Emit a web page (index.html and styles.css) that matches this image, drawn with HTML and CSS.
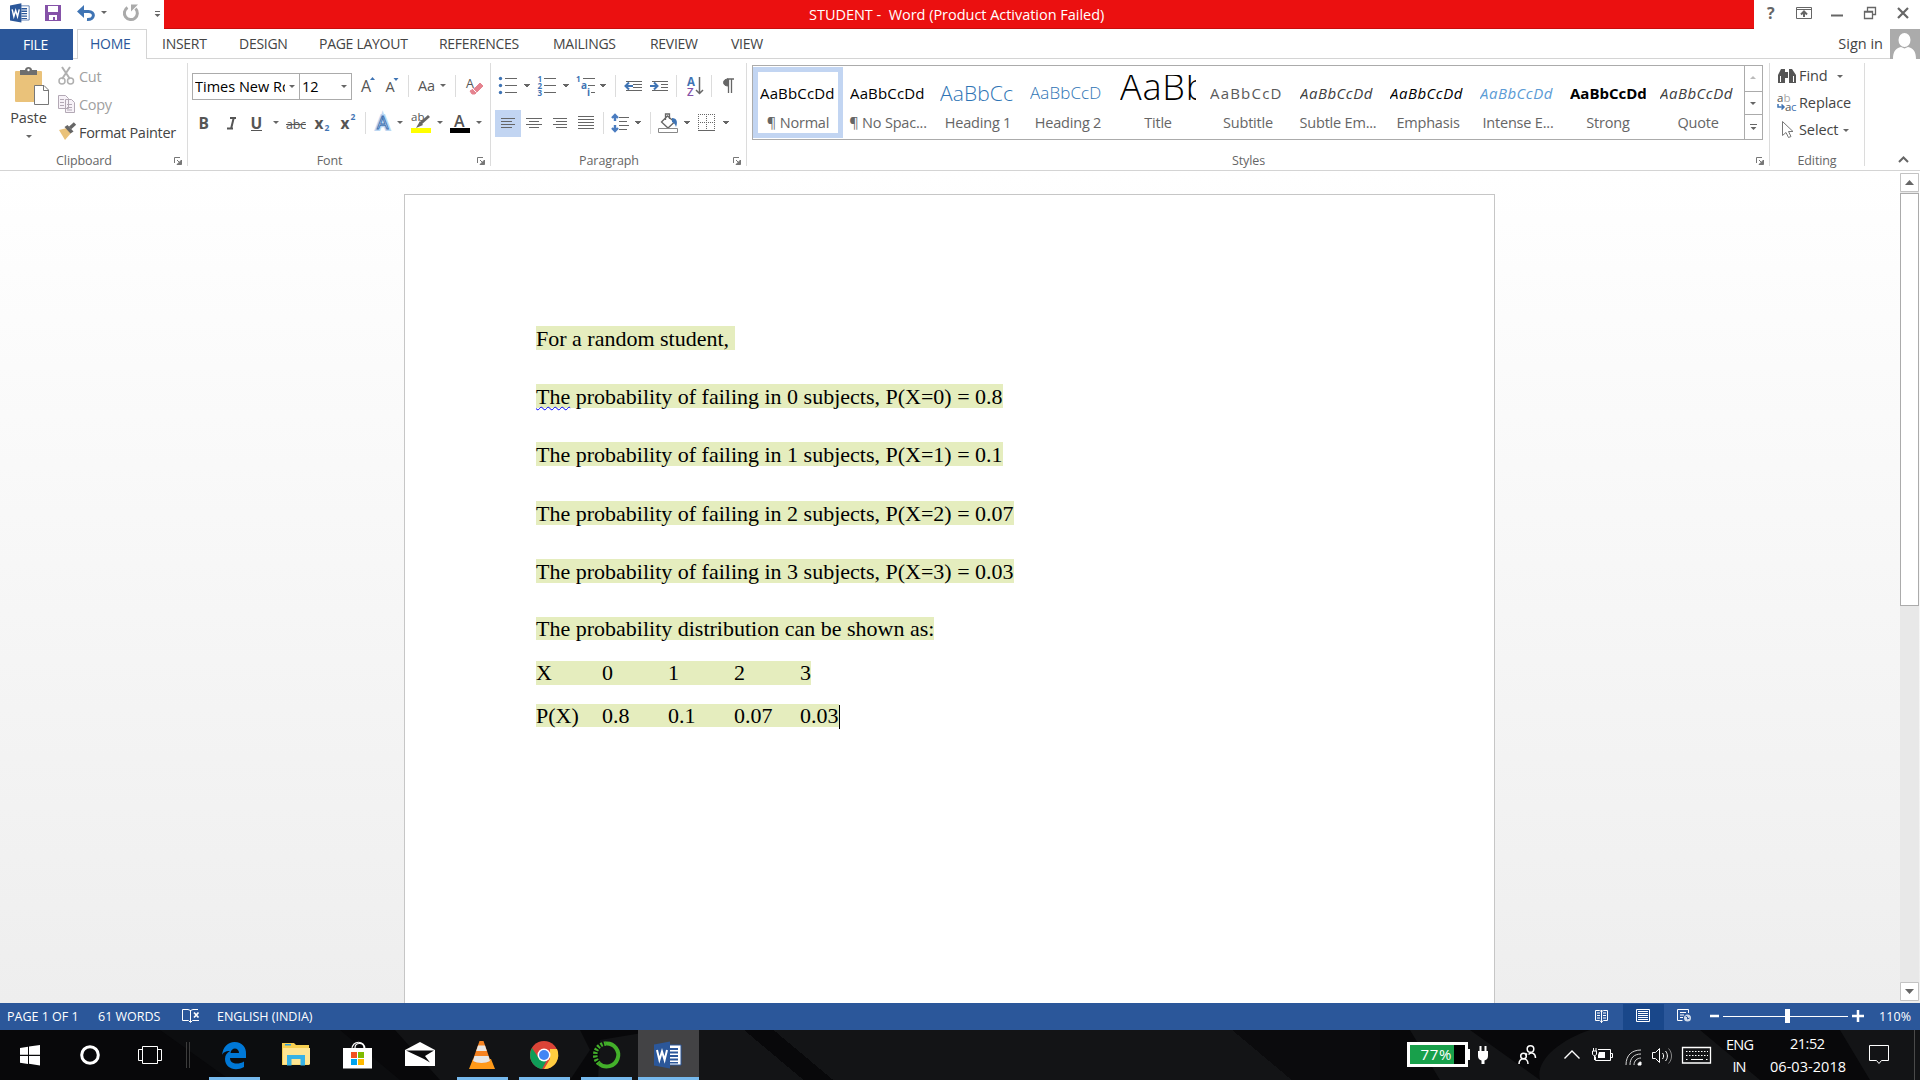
FILE: index.html
```html
<!DOCTYPE html>
<html lang="en">
<head>
<meta charset="utf-8">
<title>STUDENT - Word</title>
<link rel="stylesheet" href="styles.css">
</head>
<body>
<svg class="defs" width="0" height="0">
  <defs>
    <symbol id="arr" viewBox="0 0 6 3" width="6" height="3"><path d="M0 0h6L3 3z" fill="#666"/></symbol>
    <symbol id="launch" viewBox="0 0 8 8" width="8" height="8"><path d="M.5 6V.5H6" fill="none" stroke="#777"/><path d="M3 3l3 3M7.500 3v4.500H3z" fill="#777" stroke="#777"/></symbol>
    <symbol id="word" viewBox="0 0 28 28" width="28" height="28"><path d="M15 4h12v20H15z" fill="#fff" stroke="#2b579a"/><path d="M16 7h8v2h-8zM16 10.500h8v2h-8zM16 14h8v2h-8zM16 17.500h8v2h-8zM16 21h8v1.500h-8z" fill="#2b579a"/><path d="M0 3.500L16 .5v27L0 24.500z" fill="#2b579a"/><path d="M3 9l2.400 10L8 10.500 10.600 19 13 9" fill="none" stroke="#fff" stroke-width="2"/></symbol>
  </defs>
</svg>

<header class="titlebar">
  <svg class="quick" width="164" height="29" viewBox="0 0 164 29">
    <use href="#word" transform="translate(10 3) scale(.71)"/>
    <path d="M45 5h16v16H45z" fill="#8552a8"/><path d="M48 6h10v6H48zM49 15h8v5h-2v-3h-2v3h-4z" fill="#fff"/>
    <path d="M80 11.500h8.500c7 0 6.500 8.500-1.500 8" fill="none" stroke="#3f74b4" stroke-width="3"/><path d="M77 11.500l7-6.500v13z" fill="#3f74b4"/>
    <use href="#arr" x="101" y="11"/>
    <path d="M127.500 7.500a6.500 6.500 0 1 0 8 1" fill="none" stroke="#aaa" stroke-width="3"/><path d="M131 4.500h7l-7 7z" fill="#aaa"/>
    <path d="M155 11.500h5" stroke="#666"/><use href="#arr" x="154.500" y="14"/>
  </svg>
  <div class="caption"><span>STUDENT -&nbsp; Word (Product Activation Failed)</span></div>
  <svg width="166" height="29" viewBox="1754 0 166 29" fill="none" stroke="#666">
    <text x="1767" y="19" class="help">?</text>
    <path d="M1796.500 7.500h15v11h-15zM1797 9.500h14" /><path d="M1804 17v-5M1801 14.500l3-3 3 3" stroke-width="2"/>
    <path d="M1831 15.500h12" stroke-width="2"/>
    <path d="M1864.500 11.500h8v7h-8zM1867.500 11V7.500h8v7h-3M1864 12h9" stroke-width="1.300"/>
    <path d="M1898 8l10 10M1908 8l-10 10" stroke-width="2.200"/>
  </svg>
</header>

<nav class="tabs">
  <span class="tab file">FILE</span><span class="tab home">HOME</span><span class="tab t-insert">INSERT</span><span class="tab t-design">DESIGN</span><span class="tab t-layout">PAGE LAYOUT</span><span class="tab t-ref">REFERENCES</span><span class="tab t-mail">MAILINGS</span><span class="tab t-review">REVIEW</span><span class="tab t-view">VIEW</span>
  <span class="signin">Sign in</span>
  <svg width="30" height="30" viewBox="0 0 30 30"><path d="M0 0h30v30H0z" fill="#ababab"/><ellipse cx="14.500" cy="11" rx="6" ry="7" fill="#fff"/><path d="M3 30c0-8 3-11 8-12l3.500 1.500L18 18c5 1 8 4 8 12z" fill="#fff"/></svg>
</nav>

<section class="ribbon">
  <div class="group clipboard">
    <div class="body">
      <div class="paste">
        <svg width="36" height="40" viewBox="14 66 36 40"><rect x="15" y="71" width="27" height="31" rx="1" fill="#eac27a"/><path d="M20 70h5c0-4 7-4 7 0h5v5H20z" fill="#6e6e6e"/><circle cx="28.500" cy="70" r="1.200" fill="#fff"/><path d="M34.500 85.500H44l4.500 4.500v14.500h-14z" fill="#fff" stroke="#777"/><path d="M43.500 85.500V90.500H48.500" fill="none" stroke="#777"/></svg>
        <span>Paste</span>
        <svg width="6" height="3"><use href="#arr"/></svg>
      </div>
      <div class="clips">
        <div class="clip off"><svg width="20" height="20" viewBox="57 66 20 20" fill="none" stroke="#b0b0b0" stroke-width="2"><path d="M62 67l8 12M70 67l-8 12"/><circle cx="62" cy="81" r="3" stroke-width="1.500"/><circle cx="70.500" cy="81" r="3" stroke-width="1.500"/></svg><span>Cut</span></div>
        <div class="clip off"><svg width="20" height="20" viewBox="57 94 20 20" fill="#f7f2f8" stroke="#b3a9b5"><path d="M58.500 95.500h7l3 3v10h-10zM65.500 99.500h6l3 3v10h-9z"/><path d="M60 99.500h4M60 102.500h4M60 105.500h4M67 104.500h5M67 107.500h5M67 110h5"/></svg><span>Copy</span></div>
        <div class="clip"><svg width="20" height="20" viewBox="57 122 20 20"><path d="M59 130l8-2 4 5-6 7z" fill="#eac27a"/><path d="M64.500 127l3-2 6 6.500-3 2z" fill="#666"/><path d="M70 128l5-4.500" stroke="#666" stroke-width="3.500"/></svg><span>Format Painter</span></div>
      </div>
    </div>
    <div class="name">Clipboard</div>
    <svg class="launcher" width="8" height="8"><use href="#launch"/></svg>
  </div>

  <div class="group font">
    <div class="body">
      <div class="row">
        <div class="box face"><span>Times New Ro</span><svg width="6" height="3"><use href="#arr"/></svg></div>
        <div class="box size"><span>12</span><svg width="6" height="3"><use href="#arr"/></svg></div>
        <svg width="138" height="27" viewBox="352 73 138 27">
          <text x="361" y="92" class="g16">A</text><path d="M370 80h5l-2.500-3z" fill="#3f74b4"/>
          <text x="385.500" y="92" class="g14">A</text><path d="M393.500 78h5l-2.500 3z" fill="#3f74b4"/>
          <path d="M408.500 75v22M455.500 75v22" stroke="#dcdcdc"/>
          <text x="418" y="91" class="g14" textLength="17">Aa</text><use href="#arr" x="440" y="84"/>
          <text x="466" y="88" class="g12">A</text><path d="M475 88l5-5 3 3-8 8h-3l-2-3z" fill="#e5838f" stroke="#e5838f"/><path d="M472.500 88.500l4 4" stroke="#fff"/>
        </svg>
      </div>
      <div class="row">
        <svg width="302" height="27" viewBox="188 110 302 27">
          <text x="198.500" y="129" class="g15 b">B</text>
          <path d="M230 118h6M227 128.500h6M233.700 118l-2.700 11" stroke="#555" stroke-width="2" fill="none"/>
          <text x="250.500" y="129" class="g15 b">U</text><path d="M251 130.500h11" stroke="#555"/><use href="#arr" x="273" y="121"/>
          <text x="286" y="129" class="g12" textLength="20">abc</text><path d="M286 124.500h20" stroke="#555"/>
          <text x="314.500" y="129" class="g15 b">x</text><text x="324.500" y="131" class="tiny">2</text>
          <text x="340.500" y="129" class="g15 b">x</text><text x="350.500" y="120" class="tiny">2</text>
          <path d="M365.500 112v22" stroke="#dcdcdc"/>
          <text x="377" y="129" class="glow2">A</text><text x="377" y="129" class="glow">A</text><use href="#arr" x="397" y="121"/>
          <text x="411" y="121" class="g11">ab</text><path d="M429 116l-9 8" stroke="#666" stroke-width="3"/><path d="M420 121l3 4-7 3z" fill="#666"/><path d="M411 128h20v5h-20z" fill="#ff0"/><use href="#arr" x="437" y="121"/>
          <text x="454" y="127" class="g16 b2">A</text><path d="M450 128h20v5h-20z"/><use href="#arr" x="476" y="121"/>
        </svg>
      </div>
    </div>
    <div class="name">Font</div>
    <svg class="launcher" width="8" height="8"><use href="#launch"/></svg>
  </div>

  <div class="group para">
    <div class="body">
      <div class="row">
        <svg width="255" height="27" viewBox="491 73 255 27" fill="none" stroke="#666">
          <g fill="#3f74b4" stroke="none"><circle cx="500.500" cy="78.500" r="1.700"/><circle cx="500.500" cy="85.500" r="1.700"/><circle cx="500.500" cy="92.500" r="1.700"/></g>
          <path d="M505 78.500h12M505 85.500h12M505 92.500h12"/><use href="#arr" x="524" y="84"/>
          <text x="537.500" y="81.500" class="num">1</text><text x="537.500" y="88.500" class="num">2</text><text x="537.500" y="95.500" class="num">3</text>
          <path d="M544 78.500h12M544 85.500h12M544 92.500h12"/><use href="#arr" x="563" y="84"/>
          <text x="576" y="82" class="num">1</text><text x="581" y="88.500" class="num n2">a</text><text x="587" y="95.500" class="num n2">i</text>
          <path d="M583 78.500h12M588 85.500h7M591 92.500h4"/><use href="#arr" x="600" y="84"/>
          <path d="M615.500 75v22M676.500 75v22M711.500 75v22" stroke="#dcdcdc"/>
          <path d="M626 81.500h16M633 84.500h9M633 87.500h9M626 90.500h16M652 81.500h16M661 84.500h7M661 87.500h7M652 90.500h16"/>
          <path d="M633 86h-7M629 82.500l-3.500 3.500 3.500 3.500M650 86h7M654 82.500l3.500 3.500-3.500 3.500" stroke="#3f74b4" stroke-width="2"/>
          <text x="687" y="85.500" class="az">A</text><text x="687" y="95.500" class="az z">Z</text>
          <path d="M699.500 77v16M696 90l3.500 3.500 3.500-3.500" stroke-width="1.500"/>
          <path d="M727 79h7M728.500 79v14M731.500 79v14" stroke-width="1.300"/><path d="M728 79c-6 0-6 7 0 7z" fill="#666"/>
        </svg>
      </div>
      <div class="row">
        <svg width="255" height="27" viewBox="491 110 255 27" fill="none" stroke="#666">
          <path d="M495 110h26v27h-26z" fill="#c2d5f2" stroke="none"/>
          <path d="M501 118.500h14M501 121.500h11M501 124.500h14M501 127.500h11M526 118.500h16M529 121.500h10M526 124.500h16M529 127.500h10M553 118.500h14M556 121.500h11M553 124.500h14M556 127.500h11M578 116.500h16M578 119.500h16M578 122.500h16M578 125.500h16M578 128.500h16"/>
          <path d="M603.500 112v22M650.500 112v22" stroke="#dcdcdc"/>
          <path d="M619 117.500h10M619 121.500h8M619 125.500h10M619 129.500h8"/>
          <path d="M615 116v5M615 125v5M612 118l3-3 3 3M612 128l3 3 3-3" stroke="#4a7cc0" stroke-width="2.400"/>
          <use href="#arr" x="635" y="121"/>
          <path d="M661.500 122l6-6 7 6-6.500 6zM665.500 120v-6h4v5" stroke-width="1.300"/><path d="M672 118c5 0 6 4 4 9-1-3-2-4-4-5z" fill="#3f74b4" stroke="none"/><path d="M658.500 128.500h19v4h-19z" stroke="#888"/><use href="#arr" x="684" y="121"/>
          <path d="M698.500 114v16M706.500 114v16M714.500 114v16M698 114.500h17M698 122.500h17" stroke-dasharray="1 1"/><path d="M698 130.500h17"/><use href="#arr" x="723" y="121"/>
        </svg>
      </div>
    </div>
    <div class="name">Paragraph</div>
    <svg class="launcher" width="8" height="8"><use href="#launch"/></svg>
  </div>

  <div class="group styles">
    <div class="gallery">
      <div class="style sel"><div class="pv">AaBbCcDd</div><span>¶ Normal</span></div>
      <div class="style"><div class="pv">AaBbCcDd</div><span>¶ No Spac...</span></div>
      <div class="style"><div class="pv h1">AaBbCc</div><span>Heading 1</span></div>
      <div class="style"><div class="pv h2">AaBbCcD</div><span>Heading 2</span></div>
      <div class="style"><div class="pv ttl">AaBb</div><span>Title</span></div>
      <div class="style"><div class="pv sub">AaBbCcD</div><span>Subtitle</span></div>
      <div class="style"><div class="pv it">AaBbCcDd</div><span>Subtle Em...</span></div>
      <div class="style"><div class="pv it k">AaBbCcDd</div><span>Emphasis</span></div>
      <div class="style"><div class="pv it blue">AaBbCcDd</div><span>Intense E...</span></div>
      <div class="style"><div class="pv st">AaBbCcDd</div><span>Strong</span></div>
      <div class="style"><div class="pv it">AaBbCcDd</div><span>Quote</span></div>
      <svg class="gscroll" width="18" height="73" viewBox="0 0 18 73"><path d="M.5 0v73M0 25.500h18M0 48.500h18" stroke="#ababab"/><path d="M6 13h6l-3-3z" fill="#bbb"/><use href="#arr" x="6" y="36"/><path d="M6 58.500h7" stroke="#666"/><use href="#arr" x="6.500" y="61"/></svg>
    </div>
    <div class="name">Styles</div>
    <svg class="launcher" width="8" height="8"><use href="#launch"/></svg>
  </div>

  <div class="group editing">
    <div class="edits">
      <div class="edit"><svg width="22" height="20" viewBox="1776 66 22 20"><path d="M1778 83v-8l3-6h4v14zM1788 69h4l4 6v8h-7v-14zM1785 72h3v6h-3z" fill="#555"/><path d="M1780.500 76v6M1793.500 76v6" stroke="#fff"/></svg><span class="e1">Find</span><svg width="6" height="3"><use href="#arr"/></svg></div>
      <div class="edit"><svg width="22" height="20" viewBox="1776 93 22 20"><text x="1777" y="102" class="g11">a</text><text x="1783.500" y="102" class="g11 lt">b</text><path d="M1778 104v3h6M1781.500 104.500l2.500 2.500-2.500 2.500" fill="none" stroke="#3f74b4" stroke-width="1.500"/><text x="1785" y="111" class="g11">a</text><text x="1791" y="111" class="g11 bl">c</text></svg><span class="e2">Replace</span></div>
      <div class="edit"><svg width="22" height="20" viewBox="1776 120 22 20"><path d="M1782.500 121.500v14l3.500-3 2.500 5 2.500-1-2.500-5h4.500z" fill="#fff" stroke="#777"/></svg><span class="e3">Select</span><svg width="6" height="3"><use href="#arr"/></svg></div>
    </div>
    <div class="name">Editing</div>
  </div>
  <svg class="collapse" width="55" height="111" viewBox="1865 59 55 111"><path d="M1899 162l4.500-4.500 4.500 4.500" fill="none" stroke="#666" stroke-width="2"/></svg>
</section>

<main class="canvas">
  <article class="page">
    <p class="p1"><mark>For a random student,&nbsp;</mark></p>
    <p><mark><u>The</u> probability of failing in 0 subjects, P(X=0) = 0.8</mark></p>
    <p><mark>The probability of failing in 1 subjects, P(X=1) = 0.1</mark></p>
    <p class="adj"><mark>The probability of failing in 2 subjects, P(X=2) = 0.07</mark></p>
    <p><mark>The probability of failing in 3 subjects, P(X=3) = 0.03</mark></p>
    <p class="p6"><mark>The probability distribution can be shown as:</mark></p>
    <p class="p7"><mark>X&#9;0&#9;1&#9;2&#9;3</mark></p>
    <p class="p8"><mark>P(X)&#9;0.8&#9;0.1&#9;0.07&#9;0.03</mark><i class="caret"></i></p>
  </article>
  <aside class="scroll">
    <svg width="19" height="19" viewBox="0 0 19 19"><path d="M.5.5h18v18H.5z" fill="#fff" stroke="#c3c3c3"/><path d="M5 12h9L9.500 7z" fill="#666"/></svg>
    <div class="thumb"></div>
    <svg width="19" height="19" viewBox="0 0 19 19"><path d="M.5.5h18v18H.5z" fill="#fff" stroke="#c3c3c3"/><path d="M5 7h9l-4.500 5z" fill="#666"/></svg>
  </aside>
</main>

<footer class="status">
  <span class="s1">PAGE 1 OF 1</span><span class="s2">61 WORDS</span>
  <svg width="35" height="27" viewBox="182 1003 35 27" fill="none" stroke="#fff"><path d="M190.500 1010v12M198 1009.500h-5l-2.500 1-2.500-1h-5.500v11h6l2 2 2-2h6.500"/><path d="M194 1012.500l4.500 5M198.500 1012.500l-4.500 5" stroke-width="1.700"/></svg>
  <span class="s3">ENGLISH (INDIA)</span>
  <svg class="views" width="290" height="27" viewBox="1585 1003 290 27" fill="none" stroke="#fff">
    <path d="M1623 1004h41v26h-41z" fill="#19478a" stroke="none"/>
    <path d="M1595.500 1010.500h4l2 1 2-1h4v10h-4l-2 1.500-2-1.500h-4zM1601.500 1010v13M1597 1013h3M1597 1015.500h3M1597 1018h3M1603 1013h3M1603 1015.500h3M1603 1018h3"/>
    <path d="M1636.500 1009.500h13v12h-13zM1638 1011.500h10M1638 1013.500h10M1638 1015.500h10M1638 1017.500h10M1638 1019.500h10"/>
    <path d="M1688.500 1013v-3.500h-11v11h5M1680 1012.500h6M1680 1015h4M1680 1017.500h3"/><circle cx="1687.500" cy="1018" r="3.500" fill="#cfdaea" stroke="none"/><path d="M1685.500 1016l2 1v2l2-1" stroke="#2b579a"/>
    <path d="M1710 1016h9M1852 1016h12M1858 1010v12" stroke-width="2.500"/><path d="M1723 1016.500h125"/><path d="M1785 1009h5v14h-5z" fill="#fff" stroke="none"/>
  </svg>
  <span class="s4">110%</span>
</footer>

<footer class="taskbar">
  <svg width="700" height="50" viewBox="0 1030 700 50">
    <path d="M160 1030h180l60 50H230z" fill="#0c0d0f"/><path d="M395 1030h185l10 20-20 30H440z" fill="#121315"/><path d="M600 1040l60-10h40v50H598z" fill="#131416"/>
    <path d="M20 1048l8-1.200v8H20zM29 1046.600l11-1.600v9.800H29zM20 1056h8v8l-8-1.200zM29 1056h11v9.500l-11-1.700z" fill="#fff"/>
    <circle cx="90" cy="1055" r="8.300" fill="none" stroke="#fff" stroke-width="3"/>
    <path d="M142.500 1046.500h15v17h-15zM142 1049.500h-3.500v11h3.500M158 1049.500h3.500v11H158" fill="none" stroke="#fff"/>
    <path d="M186.500 1042v26M189.500 1042v26" stroke="#3c3c3c"/>
    <path d="M209 1077h51v3h-51zM457 1077h51v3h-51zM519 1077h51v3h-51zM581 1077h51v3h-51z" fill="#76b9ed"/>
    <path d="M222 1055c1-8 6-13 12.500-13 8 0 12 6 11.500 12v4h-16c0 6 8 7 14 3.500v5.500c-9 5-19 1-19-8 0-4 2-6 5-8-5 0-7 2-8 4zM230.500 1053H239c0-6-8-6-8.500 0z" fill="#0078d7"/>
    <path d="M282 1043h12l2 2h13v20h-27z" fill="#f7cf50"/><path d="M283 1048h27v16.500h-27z" fill="#ffe593"/><path d="M285 1044h6v1.500h-6z" fill="#2f9edb"/><path d="M287 1065.500V1055h18v10.500h-4.500V1059h-9v6.500z" fill="#37b2e6"/>
    <path d="M352 1049c0-9 13-9 13 0M355 1048c0-6 9-6 9 0" fill="none" stroke="#fff" stroke-width="1.200"/><path d="M343 1048h29v20.500h-29z" fill="#fff"/><path d="M351 1052h6v6h-6z" fill="#f25022"/><path d="M358 1052h6v6h-6z" fill="#7fba00"/><path d="M351 1059h6v6h-6z" fill="#00a4ef"/><path d="M358 1059h6v6h-6z" fill="#ffb900"/>
    <path d="M405 1050l15-8 15 8v16h-30z" fill="#fff"/><path d="M406 1050.500l18 8.500 6 3.500-5-6.500 9-5.500z" fill="#0b0b0c"/>
    <path d="M473 1059h18l4 10h-26z" fill="#ff9a1a"/><path d="M479.500 1041h4l7 20c-4 3-14 3-18 0z" fill="#f58220"/><path d="M478 1045.500h7l1.800 5.500h-10.600zM474.500 1056h14l1.500 5c-4 2.500-13 2.500-17 0z" fill="#e6e6e6"/>
    <circle cx="544" cy="1055" r="14" fill="#db4437"/><path d="M532 1048a14 14 0 0 0 10 21l6-11-10-1z" fill="#0f9d58"/><path d="M557 1049a14 14 0 0 1-13 20l6-10 0-10z" fill="#ffcd40"/><circle cx="544" cy="1055" r="6.500" fill="#fff"/><circle cx="544" cy="1055" r="5" fill="#4285f4"/>
    <path d="M606 1043.500a11.500 11.500 0 1 1-7 20" fill="none" stroke="#43b02a" stroke-width="4"/><path d="M599 1063.500a11.500 11.500 0 0 1 7-20" fill="none" stroke="#43b02a" stroke-width="4.500" stroke-dasharray="2 1.500"/>
    <path d="M638 1030h61v50h-61z" fill="#434345"/><path d="M638 1077h61v3h-61z" fill="#76b9ed"/><use href="#word" x="654" y="1041"/>
  </svg>
  <div class="wall"></div>
  <svg class="tray" width="540" height="50" viewBox="1380 1030 540 50" fill="none" stroke="#fff">
    <path d="M1410 1030h60l70 50h-100zM1590 1030h110l60 50h-220c-5-20 20-40 50-50M1840 1030h80v50h-50z" fill="#131416" stroke="none"/>
    <path d="M1407 1042h61v7h2v11h-2v7h-61z" fill="#fff" stroke="none"/><path d="M1410 1045h55v19h-55z" fill="#000" stroke="none"/><path d="M1410 1045h44v19h-44z" fill="#18a04b" stroke="none"/>
    <text x="1420.500" y="1060" class="pct" textLength="31">77%</text>
    <path d="M1478 1051h10v5c0 3-2 4-3.500 4.500v3.500h-3v-3.500c-1.500-.5-3.500-1.500-3.500-4.500zM1479.500 1046h2v5h-2zM1484.500 1046h2v5h-2z" fill="#fff" stroke="none"/>
    <g stroke-width="1.500"><circle cx="1523.500" cy="1056" r="2.800"/><circle cx="1530.500" cy="1049" r="3.300"/><path d="M1519 1064c0-7 9-7 9 0M1527 1053.500l-1.500 2M1528.500 1054.500c3-3 7-1 7 3.500"/></g>
    <path d="M1564.500 1058.500l7.500-7.500 7.500 7.500" stroke-width="1.400"/>
    <path d="M1598 1049.500h12.500v11h-15v-4M1611 1053.500h1.500v4h-1.500M1592.500 1051v3c0 2 4 2 4 0v-3zM1594.500 1056v4M1593.500 1048v3M1596 1048v3"/><path d="M1599 1052h6v6h-7v-3z" fill="#fff" stroke="none"/>
    <path d="M1626 1065c0-10 6-15 15-15M1630 1065c0-7 4-11 11-11M1634 1065c0-4 3-7 7-7" stroke="#d5d5d5"/><path d="M1638 1065c0-2 1-3 3-3v3z" fill="#fff"/>
    <path d="M1652.500 1052.500h3l4-4v14l-4-4h-3zM1662.500 1053c1.500 2 1.500 4 0 6M1665.500 1051c2.500 3 2.500 7 0 10"/><path d="M1668.500 1048.500c4 4 4 11 0 15" stroke="#888"/>
    <path d="M1682.500 1047.500h28v15.500h-28z" stroke-width="1.300"/><path d="M1686 1051.500h22M1686 1055.500h22M1686 1059.500h3M1706 1059.500h2" stroke-dasharray="1.500 1.500"/><path d="M1691 1059.500h12"/>
    <text x="1726" y="1049.500" class="tr" textLength="28">ENG</text><text x="1732.500" y="1072" class="tr" textLength="14">IN</text>
    <text x="1790" y="1048.500" class="tr" textLength="35">21:52</text><text x="1770" y="1072" class="tr" textLength="76">06-03-2018</text>
    <path d="M1869.500 1045.500h19v15h-7l-2.500 3-2.500-3h-7z"/><path d="M1914.500 1030v50" stroke="#4a4a4a"/>
  </svg>
</footer>
</body>
</html>
```
FILE: styles.css
```css
* { box-sizing: border-box; }
html, body { margin: 0; height: 100%; }
body {
  width: 1920px; height: 1080px; overflow: hidden; display: flex; flex-direction: column;
  font: 14.5px/20px "Open Sans", "Noto Sans", sans-serif; color: #444; background: #fff; letter-spacing: -.3px;
}
svg { display: block; flex: none; }
.defs { position: absolute; }
text { stroke: none; letter-spacing: 0; }
span { white-space: nowrap; }

.titlebar { height: 29px; display: flex; flex: none; }
.caption { width: 1590px; background: #eb1010; border-bottom: 1px solid #c80d0d; color: #fff; line-height: 29px; padding-left: 645px; letter-spacing: -.03px; }
.help { font-weight: 700; font-size: 16px; fill: #666; }

.tabs { height: 30px; flex: none; display: flex; border-bottom: 1px solid #d4d4d4; line-height: 29px; }
.tab { flex: none; font-size: 14px; letter-spacing: -.28px; }
.file { width: 73px; height: 31px; background: #2b579a; color: #fff; padding-left: 23px; line-height: 31px; }
.home { width: 70px; height: 30px; margin: 0 15px 0 4px; padding-left: 12px; border: 1px solid #d4d4d4; border-bottom: 0; background: #fff; color: #2b579a; line-height: 28px; }
.t-insert { width: 77px; } .t-design { width: 80px; } .t-layout { width: 120px; }
.t-ref { width: 114px; } .t-mail { width: 97px; } .t-review { width: 81px; }
.signin { margin: 0 7px 0 auto; letter-spacing: 0; }

.ribbon { height: 112px; flex: none; display: flex; border-bottom: 1px solid #d4d4d4; }
.group { position: relative; display: flex; flex-direction: column; border-right: 1px solid #dcdcdc; margin: 4px 0; height: 103px; }
.clipboard { width: 188px; } .font { width: 303px; } .para { width: 256px; } .styles { width: 1023px; } .editing { width: 95px; }
.body { height: 88px; }
.name { margin-top: auto; text-align: center; font-size: 12.5px; line-height: 13px; color: #666; height: 13px; margin-bottom: -1px; letter-spacing: -.1px; padding-right: 19px; }
.editing .name { padding: 0; }
.launcher { position: absolute; right: 5px; bottom: 1px; }

.clipboard .body { display: flex; }
.paste { width: 57px; padding-top: 3px; display: flex; flex-direction: column; align-items: center; line-height: 20px; }
.paste > svg:first-child { margin-left: 6px; }
.paste span { margin: 2px 0 7px; letter-spacing: -.1px; }
.clips { display: flex; flex-direction: column; gap: 8px; padding-top: 3px; }
.clip { display: flex; gap: 2px; height: 20px; line-height: 22px; }
.off { color: #a0a0a0; }

.row { display: flex; height: 27px; margin-top: 10px; }
.font .row:first-child { padding-left: 4px; }
.box { border: 1px solid #ababab; height: 27px; display: flex; align-items: center; justify-content: space-between; padding: 0 7px 0 2px; color: #000; background: #fff; letter-spacing: 0; }
.face { width: 108px; padding-right: 4px; } .size { width: 53px; margin-left: -1px; padding-right: 4px; }
.face span { width: 90px; overflow: hidden; }
.g16 { font-size: 16px; fill: #555; } .g15 { font-size: 15.5px; fill: #555; } .g14 { font-size: 14.5px; fill: #555; } .g12 { font-size: 12.5px; fill: #555; } .g11 { font-size: 11.5px; fill: #555; }
.b { font-weight: 700; } .b2 { font-weight: 600; }
.lt { fill: #aaa; } .bl { fill: #3f74b4; }
.tiny { font-size: 8.5px; fill: #3f74b4; font-weight: 700; }
.glow { font-size: 18px; fill: #fff; stroke: #3f74b4; stroke-width: 1px; }
.glow2 { font-size: 18px; fill: none; stroke: #bcd7f2; stroke-width: 4px; }
.num { font: 700 8px "Open Sans", sans-serif; fill: #3f74b4; } .n2 { font-size: 10px; }
.az { font: 700 11.5px "Open Sans", sans-serif; fill: #3f74b4; } .z { fill: #8552a8; font-weight: 600; }

.gallery { margin: 2px 0 0 5px; width: 1011px; height: 75px; border: 1px solid #ababab; display: flex; }
.style { width: 90px; height: 71px; margin-top: 1px; padding: 8px 7px 0; text-align: center; color: #666; flex: none; }
.style span { display: block; margin: 7px -6px 0; line-height: 20px; letter-spacing: -.2px; }
.sel { box-shadow: inset 0 0 0 5px #c2d5f2; }
.pv { height: 31px; line-height: 36px; width: 76px; overflow: hidden; white-space: nowrap; text-align: left; color: #000; font-size: 15px; letter-spacing: .15px; }
.h1 { font-size: 21px; font-weight: 300; color: #2e74b5; letter-spacing: .1px; } .h2 { font-size: 17px; font-weight: 300; color: #2e74b5; letter-spacing: .1px; }
.ttl { font-size: 36px; font-weight: 300; line-height: 24px; letter-spacing: .8px; }
.sub { color: #5a5a5a; letter-spacing: 1.2px; } .it { font-style: italic; color: #404040; letter-spacing: .5px; } .k { color: #000; } .blue { color: #5b9bd5; } .st { font-weight: 700; letter-spacing: 0; }
.gscroll { margin-left: auto; }

.edits { display: flex; flex-direction: column; gap: 7px; padding: 3px 0 0 6px; }
.edit { display: flex; align-items: center; height: 20px; }
.edit span { margin-left: 1px; letter-spacing: -.1px; } .edit .e1 { width: 38px; } .edit .e3 { width: 44px; }

.canvas { height: 832px; flex: none; display: flex; background: linear-gradient(#fff, #eee); overflow: hidden; }
.page { width: 1091px; margin: 23px 405px 0 404px; border: 1px solid #c6c6c6; border-bottom: 0; background: #fff; padding: 131px 0 0 131px; font: 22px/26px "Liberation Serif", "Times New Roman", serif; color: #000; letter-spacing: 0; flex: none; }
.page p { margin: 0 0 34px; height: 24px; white-space: pre; tab-size: 66px; display: flex; }
.page .adj { margin-top: 35px; }
.page p:nth-child(3) { margin-bottom: 0; }
.page .p6 { height: 23px; line-height: 24px; margin-bottom: 21px; } .page .p7 { margin-bottom: 19px; line-height: 24px; } .page .p8 { height: 23px; line-height: 23px; }
mark { background: #e5edbe; color: inherit; }
u { text-decoration: underline wavy #00f 1px; text-decoration-skip-ink: none; text-underline-offset: 2px; }
.caret { width: 1px; height: 24px; background: #000; margin-top: 1px; }
.scroll { width: 19px; margin-top: 2px; height: 828px; background: #e8e8e8; display: flex; flex-direction: column; justify-content: space-between; }
.thumb { height: 413px; background: #fff; border: 1px solid #ababab; margin: 1px 0 auto; }

.status { height: 27px; flex: none; display: flex; background: #2b579a; color: #fff; font-size: 12.5px; line-height: 27px; letter-spacing: 0; }
.s1 { margin-left: 7px; width: 91px; } .s2 { width: 84px; } .s3 { width: 120px; }
.views { margin-left: auto; } .s4 { margin-left: 4px; width: 41px; letter-spacing: .1px; }
.taskbar { height: 50px; flex: none; display: flex; background: #08080a; }
.wall { flex: 1; background: linear-gradient(40deg, #131416 0 14%, #08080a 14% 18%, #131416 18% 80%, #0b0b0d 80%); }
.pct { font-size: 15px; fill: #fff; } .tr { font-size: 14.5px; fill: #fff; }
```
